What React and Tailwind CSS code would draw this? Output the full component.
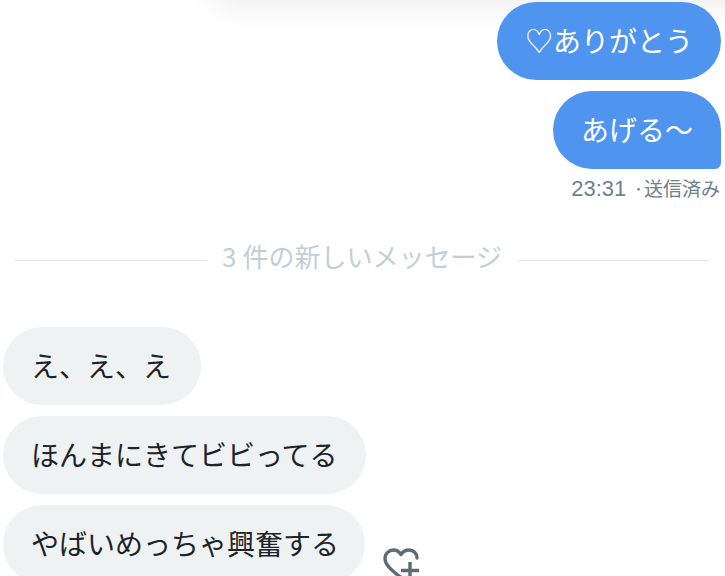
import React from "react";

const jp = "font-['Noto_Sans_CJK_JP','Liberation_Sans',sans-serif]";

const Sent = ({ children, tail }) => (
  <div
    className={`h-[78px] px-[28px] pb-[3px] flex items-center bg-[#4f94ef] text-white text-[28px] leading-none rounded-[39px] ${
      tail ? "rounded-br-[6px]" : ""
    }`}
  >
    {children}
  </div>
);

const Received = ({ children, padding }) => (
  <div
    className={`h-[78px] w-fit shrink-0 pb-[2px] flex items-center bg-[#eef2f3] text-[#1c2329] text-[28px] leading-none rounded-[39px] ${padding}`}
  >
    {children}
  </div>
);

const App = () => {
  return (
    <div className={`relative w-[725px] h-[576px] overflow-hidden bg-white ${jp}`}>
      {/* shadow from the bar above */}
      <div className="absolute left-[215px] right-[-60px] top-[-40px] h-[40px] shadow-[0_4px_32px_rgba(0,0,0,0.08)]" />

      <div className="relative flex flex-col pt-[2px]">
        <div className="flex flex-col items-end gap-[11px] pr-[4px]">
          <Sent>♡ありがとう</Sent>
          <Sent tail>あげる〜</Sent>
        </div>
        <div className="mt-[7px] pr-[5px] text-right text-[#6f7f8c] text-[19px] leading-[24px]">
          <span className="mr-[1px] text-[22px] font-['Liberation_Sans',sans-serif]">23:31 </span>
          ·送信済み
        </div>

        <div className="mt-[41px] pl-[15px] pr-[16px] flex items-center gap-[15px]">
          <div className="flex-1 h-px bg-[#e3e8eb]" />
          <span className="text-[#c2ced7] text-[26px] leading-[36px] -translate-y-[4px]">
            <span className="mr-[6px]">3</span>件の新しいメッセージ
          </span>
          <div className="flex-1 h-px bg-[#e3e8eb]" />
        </div>

        <div className="mt-[49px] flex flex-col items-start gap-[11px] pl-[3px]">
          <Received padding="pl-[28px] pr-[30px]">え、え、え</Received>
          <Received padding="px-[28px]">ほんまにきてビビってる</Received>
          <div className="flex items-start">
            <Received padding="pl-[28px] pr-[26px]">やばいめっちゃ興奮する</Received>
            <svg
              className="ml-[18px] mt-[43px] shrink-0"
              width="38"
              height="36"
              viewBox="0 0 38 36"
              fill="none"
              stroke="#5b6b78"
              strokeWidth="3.4"
              strokeLinecap="round"
              strokeLinejoin="round"
            >
              <path d="M20 31 C9 23 2 17 2 10.5 C2 5.5 6 2 10.5 2 C13.5 2 16 3.5 18 6.5 C20 3.5 22.5 2 26 2 C30.5 2 34 5.5 34 10" />
              <path d="M27 14 V32 M18 22.5 H36" strokeLinecap="butt" />
            </svg>
          </div>
        </div>
      </div>
    </div>
  );
};

export default App;
